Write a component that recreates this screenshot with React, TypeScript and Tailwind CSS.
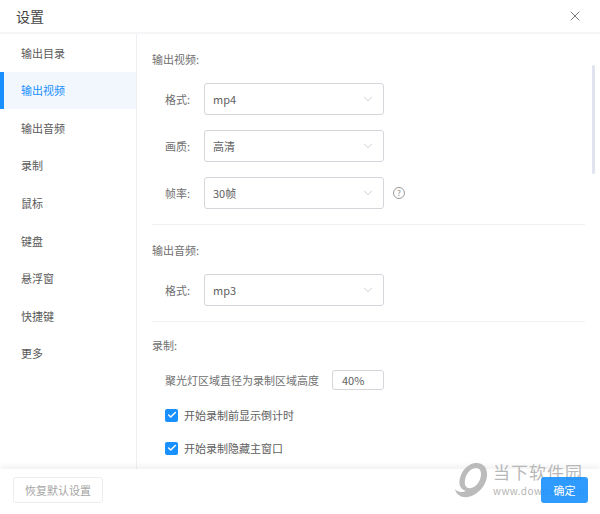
import { ChevronDown, Check, X } from "lucide-react";

const menu = ["输出目录", "输出视频", "输出音频", "录制", "鼠标", "键盘", "悬浮窗", "快捷键", "更多"];

const font = "font-['Noto_Sans_CJK_SC','Noto_Sans',sans-serif]";

function Select({ label, value, help }: { label: string; value: string; help?: boolean }) {
  return (
    <div className="flex items-center h-[32px] mb-[15px]">
      <span className="w-[52px] pl-[13px] text-[11px] text-[#707070]">{label}:</span>
      <div className="w-[180px] h-[32px] flex items-center justify-between pl-[8px] pr-[8px] bg-white border border-[#d4d6dc] rounded-[3px] text-[11px] text-[#606060]">
        <span>{value}</span>
        <ChevronDown size={14} strokeWidth={1} className="text-[#a8a8a8]" />
      </div>
      {help && (
        <span className="ml-[9px] w-[12px] h-[12px] rounded-full border border-[#999] flex items-center justify-center text-[8px] leading-none text-[#888]">
          ?
        </span>
      )}
    </div>
  );
}

function Checked({ label }: { label: string }) {
  return (
    <div className="flex items-center h-[20px] mb-[13px] pl-[13px]">
      <span className="w-[13px] h-[13px] rounded-[2px] bg-[#1890ff] flex items-center justify-center">
        <Check size={10} strokeWidth={3.5} className="text-white" />
      </span>
      <span className="ml-[6px] text-[11px] text-[#606060]">{label}</span>
    </div>
  );
}

export default function App() {
  return (
    <div className={`relative w-[600px] h-[514px] bg-white overflow-hidden flex flex-col ${font}`}>
      <header className="h-[34px] shrink-0 flex items-center justify-between pl-[16px] pr-[17px] border-b-2 border-[#f6f6f8]">
        <span className="text-[14px] text-[#444]">设置</span>
        <X size={16} strokeWidth={1} className="text-[#333]" />
      </header>

      <div className="flex-1 min-h-0 flex">
        <nav className="w-[137px] shrink-0 border-r border-[#eeeff2]">
          {menu.map((item) => (
            <div
              key={item}
              className={
                item === "输出视频"
                  ? "h-[37.6px] flex items-center pl-[17px] text-[11px] text-[#1890ff] bg-[#f2f7fd] border-l-4 border-[#1890ff]"
                  : "h-[37.6px] flex items-center pl-[21px] text-[11px] text-[#5a5a5a]"
              }
            >
              {item}
            </div>
          ))}
        </nav>

        <main className="relative flex-1 min-w-0 overflow-hidden pl-[15px] pr-[15px] pt-[15px]">
          <h3 className="h-[20px] leading-[20px] text-[11px] font-normal text-[#707070] mb-[14px]">输出视频:</h3>
          <Select label="格式" value="mp4" />
          <Select label="画质" value="高清" />
          <Select label="帧率" value="30帧" help />
          <div className="border-t border-[#f1f1f3] mt-[15px] mb-[15px]" />
          <h3 className="h-[20px] leading-[20px] text-[11px] font-normal text-[#707070] mb-[14px]">输出音频:</h3>
          <Select label="格式" value="mp3" />
          <div className="border-t border-[#f1f1f3] mt-[15px] mb-[13px]" />
          <h3 className="h-[20px] leading-[20px] text-[11px] font-normal text-[#707070] mb-[15px]">录制:</h3>
          <div className="flex items-center h-[20px] mb-[15px] pl-[13px]">
            <span className="w-[167px] text-[11px] text-[#707070] whitespace-nowrap">聚光灯区域直径为录制区域高度</span>
            <div className="w-[52px] h-[20px] flex items-center pl-[9px] border border-[#d4d6dc] rounded-[3px] text-[11px] text-[#606060]">
              40%
            </div>
          </div>
          <Checked label="开始录制前显示倒计时" />
          <Checked label="开始录制隐藏主窗口" />
          <div className="absolute top-[31px] right-[5px] w-[3px] h-[109px] rounded-full bg-[#e2e3f1]" />
        </main>
      </div>

      <footer className="relative h-[45px] shrink-0 flex items-start justify-between pt-[8px] pl-[13px] pr-[12px] bg-white shadow-[0_-3px_6px_rgba(0,0,0,0.06)]">
        <div className="w-[90px] h-[26px] flex items-center justify-center rounded-[3px] border border-[#ecedf0] text-[11px] text-[#a5a5a5]">
          恢复默认设置
        </div>
      </footer>

      {/* watermark over the corner */}
      <div className="absolute left-[454px] top-[462px] flex items-start pointer-events-none">
        <svg width="35" height="37" viewBox="0 0 35 37" className="shrink-0">
          <path
            d="M21 1C29 0 34 6 33 14C32 24 24 33 14 35C8 36 2 33 1 27C3 30 8 31 12 29C5 27 4 20 7 13C10 6 15 2 21 1ZM22 6C17 6 12 11 11 18C10 24 13 27 17 26C22 25 27 19 27 12C27 8 25 6 22 6Z"
            fill="#bbbbbb"
            fillRule="evenodd"
          />
        </svg>
        <div className="ml-[4px] flex flex-col">
          <span className="text-[17px] leading-[20px] tracking-[1px] text-[#b8b8b8] whitespace-nowrap">当下软件园</span>
          <span className="mt-[3px] text-[10px] leading-[12px] tracking-[0.4px] text-[#b4b4b4] whitespace-nowrap">www.downxia.com</span>
        </div>
      </div>

      {/* sits on top of the watermark, which still shows through a little */}
      <div className="absolute right-[12px] bottom-[11px] w-[47px] h-[26px] flex items-center justify-center rounded-[3px] bg-[#1890ff]/90 text-[11px] text-white">
        确定
      </div>
    </div>
  );
}
